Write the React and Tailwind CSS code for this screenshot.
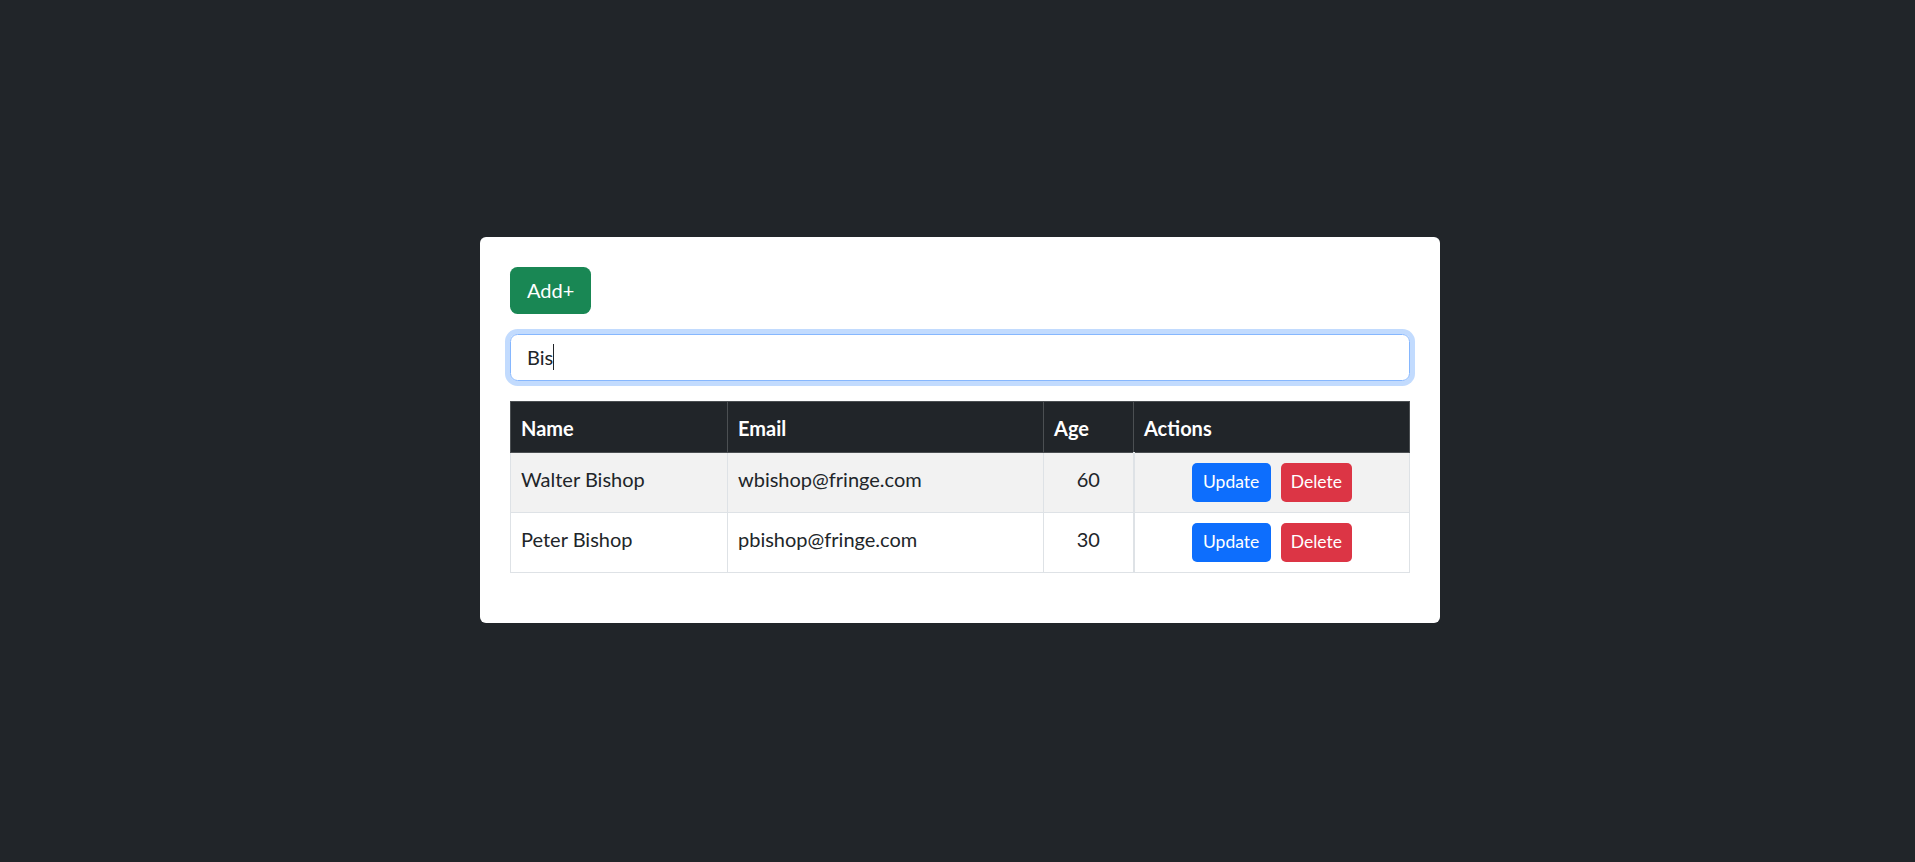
import React from 'react';

const users = [
  { name: 'Walter Bishop', email: 'wbishop@fringe.com', age: 60 },
  { name: 'Peter Bishop', email: 'pbishop@fringe.com', age: 30 },
];

const App = () => {
  return (
    <div className="min-h-screen bg-[#212529] flex items-center justify-center pl-[5px] pb-[3px] font-['Lato',sans-serif] text-[#212529]">
      <div className="w-[960px] bg-white rounded-[6px] p-[30px]">
        <button className="bg-[#198754] text-white text-[20px] leading-[30px] h-[47px] px-[17px] rounded-[7.5px] mb-5">
          Add+
        </button>

        {/* search box, shown focused */}
        <div className="h-[47px] border border-[#86b7fe] rounded-[7.5px] shadow-[0_0_0_5px_rgba(13,110,253,0.25)] px-4 flex items-center text-[20px] mb-5">
          <span>Bis</span>
          <span className="w-px h-[26px] bg-[#212529]"></span>
        </div>

        <table className="w-[900px] border-collapse text-[20px] leading-[30px] mb-5">
          <thead>
            <tr className="bg-[#212529] text-white font-bold text-left">
              <th className="w-[217px] px-[10px] pt-[11px] pb-[9px] border border-[#4b4f52]">Name</th>
              <th className="w-[316px] px-[10px] pt-[11px] pb-[9px] border border-[#4b4f52]">Email</th>
              <th className="w-[90px] px-[10px] pt-[11px] pb-[9px] border border-[#4b4f52]">Age</th>
              <th className="px-[10px] pt-[11px] pb-[9px] border border-[#4b4f52]">Actions</th>
            </tr>
          </thead>
          <tbody>
            {users.map((u, i) => (
              <tr key={u.email} className={i % 2 === 0 ? 'bg-[#f2f2f2]' : 'bg-white'}>
                <td className="px-[10px] pt-[11px] pb-[9px] align-top border border-[#dee2e6]">{u.name}</td>
                <td className="px-[10px] pt-[11px] pb-[9px] align-top border border-[#dee2e6]">{u.email}</td>
                <td className="px-[10px] pt-[11px] pb-[9px] align-top text-center border border-[#dee2e6]">{u.age}</td>
                <td className="px-[10px] py-[10px] align-top border border-[#dee2e6] border-l-2">
                  <div className="flex justify-center gap-[10px]">
                    <button className="bg-[#0d6efd] text-white text-[17.5px] leading-[26px] h-[39px] px-[11.5px] rounded-[5px]">
                      Update
                    </button>
                    <button className="bg-[#dc3545] text-white text-[17.5px] leading-[26px] h-[39px] px-[10px] rounded-[5px]">
                      Delete
                    </button>
                  </div>
                </td>
              </tr>
            ))}
          </tbody>
        </table>
      </div>
    </div>
  );
};

export default App;
